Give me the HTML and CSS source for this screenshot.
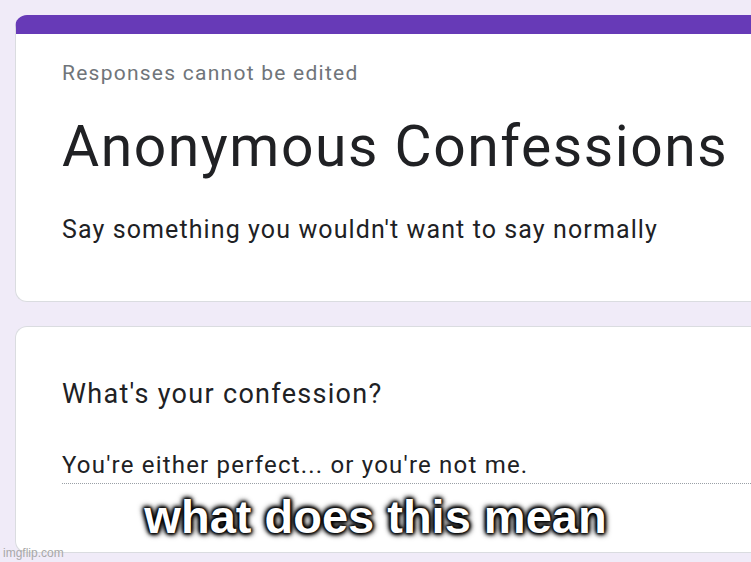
FILE: index.html
```html
<!DOCTYPE html>
<html lang="en">
<head>
    <meta charset="UTF-8">
    <meta name="viewport" content="width=device-width, initial-scale=1.0">
    <title>Anonymous Confessions</title>
    <link rel="stylesheet" href="styles.css">
</head>
<body>
<div class="form-page">
    <div class="card header-card">
        <div class="notice">Responses cannot be edited</div>
        <h1 class="form-title">Anonymous Confessions</h1>
        <div class="form-description">Say something you wouldn't want to say normally</div>
    </div>
    <div class="card question-card">
        <div class="question-title">What's your confession?</div>
        <div class="answer">You're either perfect... or you're not me.</div>
    </div>
</div>
<div class="meme-caption">what does this mean</div>
<div class="watermark">imgflip.com</div>
</body>
</html>
```

FILE: styles.css
```css
html, body {
    margin: 0;
    padding: 0;
    height: 100%;
    overflow: hidden;
}

body {
    font-family: Roboto, "Noto Sans", Arial, sans-serif;
    background-color: #f0ebf8;
    color: #202124;
    position: relative;
}

.form-page {
    padding: 15px 0 0 15px;
}

.card {
    width: 780px;
    background-color: #fff;
    border: 1px solid #dadce0;
    border-right: none;
    border-radius: 12px 0 0 12px;
    padding-left: 46px;
    box-sizing: border-box;
}

.header-card {
    border-top: 19px solid #673ab7;
    padding-top: 25px;
    padding-bottom: 55px;
}

.notice {
    font-size: 21px;
    line-height: 28px;
    letter-spacing: 1.25px;
    color: #70757a;
}

.form-title {
    margin: 26px 0 0;
    font-size: 57px;
    line-height: 68px;
    font-weight: 400;
    letter-spacing: 1.55px;
}

.form-description {
    margin-top: 33px;
    font-size: 25px;
    line-height: 32px;
    letter-spacing: 1.1px;
}

.question-card {
    margin-top: 24px;
    padding-top: 50px;
    padding-bottom: 68px;
}

.question-title {
    font-size: 27px;
    line-height: 34px;
    letter-spacing: 1.3px;
}

.answer {
    margin-top: 39px;
    font-size: 24px;
    line-height: 30px;
    letter-spacing: 1.2px;
    padding-bottom: 3px;
    border-bottom: 1px dotted #9aa0a6;
}

.meme-caption {
    position: absolute;
    top: 494px;
    left: 0;
    right: 0;
    text-align: center;
    font-family: "Liberation Sans", Arial, sans-serif;
    font-weight: bold;
    font-size: 47px;
    line-height: 46px;
    color: #fff;
    text-shadow: 0 0 2px #000, 0 0 3px #000, 0 0 4px #000, 0 0 5px #000, 1px 1px 6px #000, -1px -1px 6px #000;
}

.watermark {
    position: absolute;
    left: 3px;
    top: 546px;
    font-family: "Liberation Sans", Arial, sans-serif;
    font-size: 12px;
    line-height: 14px;
    color: #a8a8a8;
}
```
